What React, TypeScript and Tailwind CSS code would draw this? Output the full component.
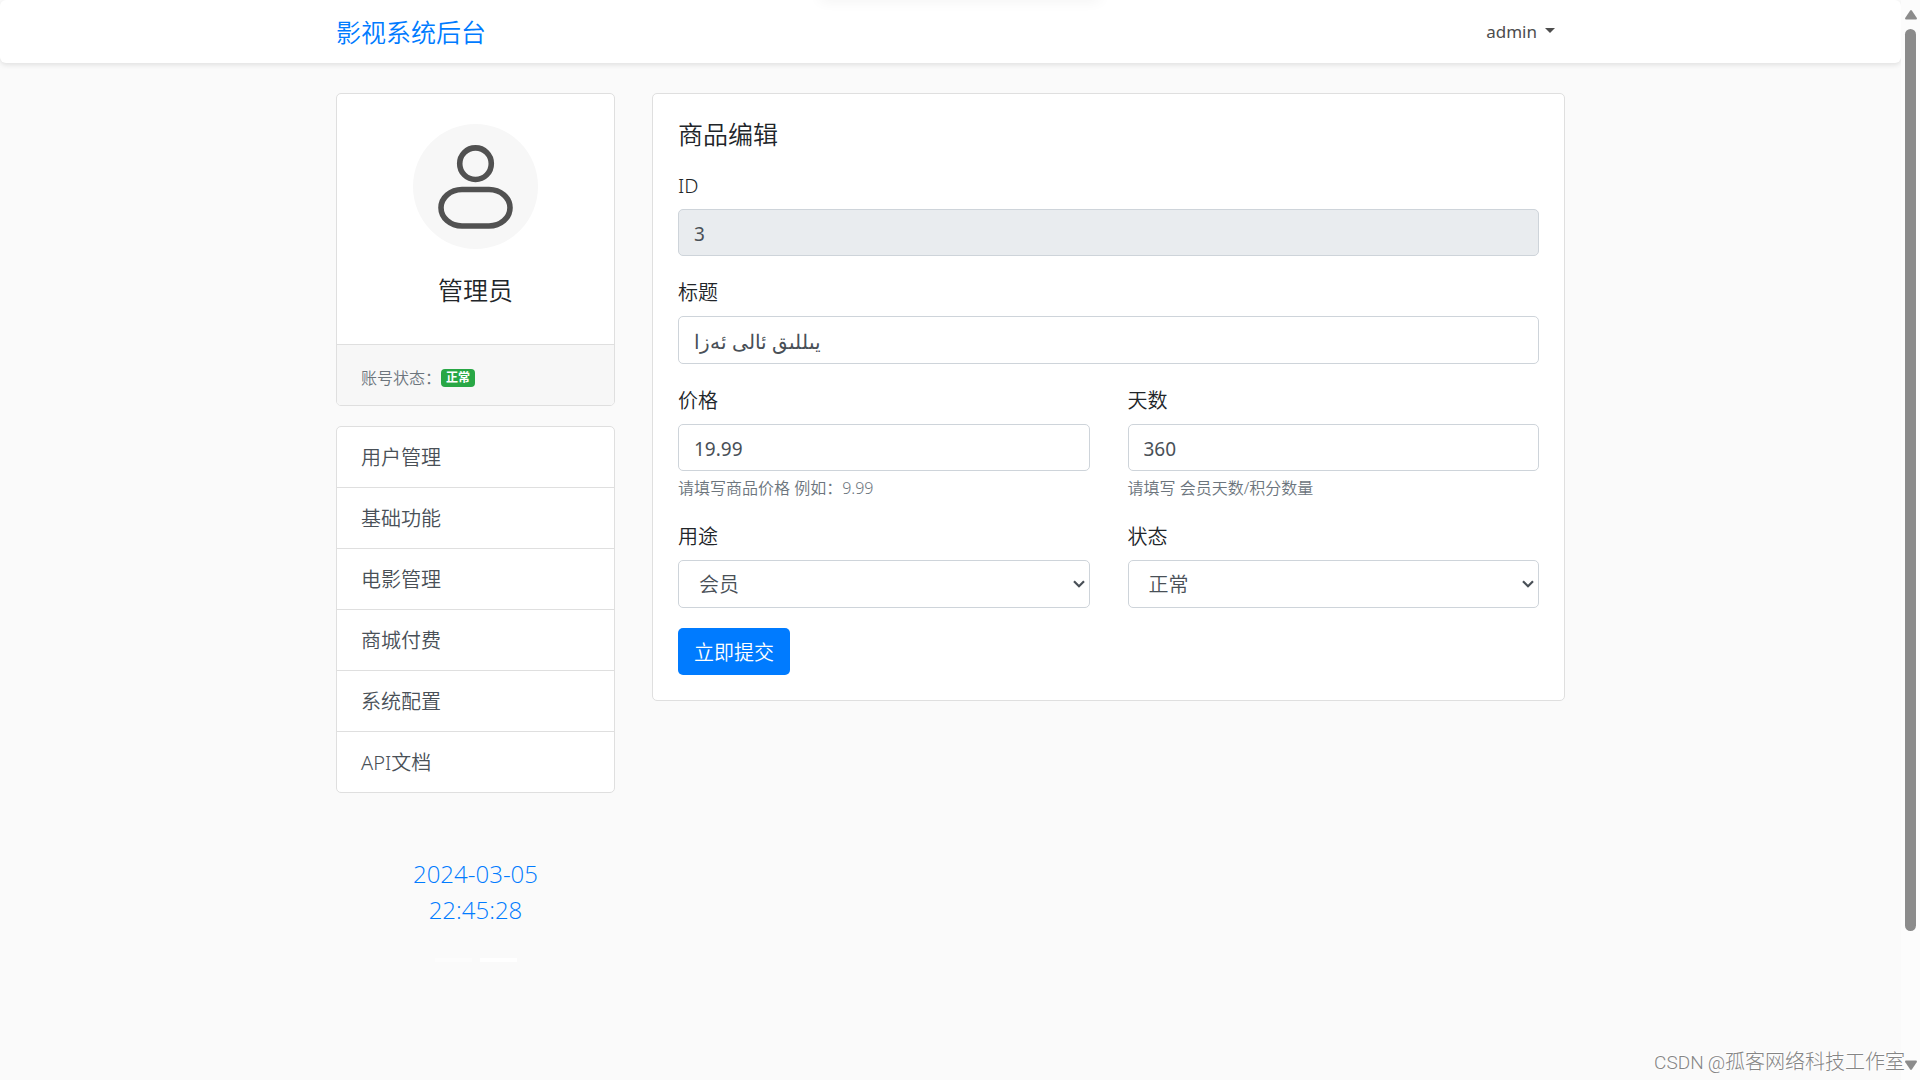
import { useState } from 'react';
import type { ReactNode } from 'react';

const MENU = ['用户管理', '基础功能', '电影管理', '商城付费', '系统配置', 'API文档'];

const controlClass =
  'block w-full rounded-[5px] border border-[#ced4da] px-[15px] pt-[2px] font-normal text-[#495057] outline-none focus:border-[#80bdff]';

export default function App() {
  return (
    <div className="relative flex min-h-screen overflow-hidden bg-[#fafafa] font-['Noto_Sans','Noto_Sans_CJK_SC',sans-serif] text-[20px] leading-[30px] font-[350] text-[#212529]">
      <div className="min-w-0 flex-1">
        <Navbar />
        <main className="mx-auto mt-[30px] flex max-w-[1229px] items-start gap-[37px]">
          <aside className="w-[279px] shrink-0">
            <ProfileCard />
            <SideMenu />
            <Clock />
          </aside>
          <ProductForm />
        </main>
      </div>
      <Scrollbar />
      <div className="absolute -top-2 left-1/2 h-2 w-[280px] -translate-x-1/2 shadow-[0_0_14px_rgba(0,0,0,0.07)]" />
      <div className="absolute right-[15px] bottom-[2px] flex items-baseline gap-1 font-['Roboto','Noto_Sans_CJK_SC',sans-serif] font-light text-[#858585] [text-shadow:-1px_-1px_0_#fff]">
        <span className="text-[19px]">CSDN</span>
        <span>
          <span className="text-[19px]">@</span>孤客网络科技工作室
        </span>
      </div>
    </div>
  );
}

function Navbar() {
  return (
    <header className="rounded-md bg-white shadow-[0_2px_5px_rgba(0,0,0,0.1)]">
      <nav className="mx-auto flex h-[63px] max-w-[1229px] items-center justify-between">
        <a href="#" className="text-[25px] text-[#007bff]">
          影视系统后台
        </a>
        <button className="flex items-center gap-2 pr-[10px] text-[17px] font-normal text-[#4d4d4d]">
          admin
          <svg width="10" height="5" viewBox="0 0 10 5" fill="currentColor" className="mb-[2px]">
            <path d="M0 0h10L5 5z" />
          </svg>
        </button>
      </nav>
    </header>
  );
}

function ProfileCard() {
  return (
    <section className="overflow-hidden rounded-[5px] border border-[#dfdfdf] bg-white">
      <div className="flex h-[250px] flex-col items-center pt-[30px]">
        <svg width="125" height="125" viewBox="0 0 125 125" fill="none" stroke="#515151" strokeWidth="5.6">
          <circle cx="62.5" cy="62.5" r="62.5" fill="#f7f7f7" stroke="none" />
          <circle cx="62.5" cy="39.7" r="15.8" />
          <rect x="28" y="65.5" width="69" height="36.5" rx="21" ry="18.25" />
        </svg>
        <h2 className="mt-[26px] text-[25px]">管理员</h2>
      </div>
      <div className="flex h-[61px] items-center border-t border-[#dfdfdf] bg-[#f7f7f7] px-6 pt-[5px] text-[16px] text-[#6c757d]">
        账号状态：
        <span className="rounded bg-[#28a745] px-[5px] text-[12px] leading-[18px] font-bold text-white">正常</span>
      </div>
    </section>
  );
}

function SideMenu() {
  return (
    <nav className="mt-5 divide-y divide-[#dfdfdf] overflow-hidden rounded-[5px] border border-[#dfdfdf] bg-white">
      {MENU.map((item) => (
        <a key={item} href="#" className="block px-6 pt-4 pb-[14px] text-[#495057] hover:bg-[#f8f9fa]">
          {item}
        </a>
      ))}
    </nav>
  );
}

function Clock() {
  return (
    <div className="mt-[63px] flex flex-col items-center text-center">
      <time
        dateTime="2024-03-05T22:45:28"
        className="font-['Open_Sans',sans-serif] text-[24px] leading-9 font-light text-[#007bff]"
      >
        2024-03-05
        <br />
        22:45:28
      </time>
      <div className="mt-[30px] flex gap-2">
        <span className="h-1 w-[37px] bg-[#fcfcfc]" />
        <span className="h-1 w-[37px] bg-white" />
      </div>
    </div>
  );
}

function ProductForm() {
  const [title, setTitle] = useState('يىللىق ئالى ئەزا');
  const [price, setPrice] = useState('19.99');
  const [days, setDays] = useState('360');

  return (
    <form
      className="min-w-0 flex-1 rounded-[5px] border border-[#dfdfdf] bg-white p-[25px]"
      onSubmit={(event) => event.preventDefault()}
    >
      <h1 className="mb-5 text-[25px]">商品编辑</h1>
      <Field id="product-id" label="ID">
        <input id="product-id" className={`${controlClass} h-[47px] bg-[#e9ecef] text-[19px]`} value="3" readOnly />
      </Field>
      <Field id="title" label="标题">
        <input
          id="title"
          className={`${controlClass} h-12 bg-white text-[20px]`}
          value={title}
          onChange={(event) => setTitle(event.target.value)}
        />
      </Field>
      <div className="grid grid-cols-2 gap-x-[38px]">
        <Field id="price" label="价格" hint="请填写商品价格 例如：9.99">
          <input
            id="price"
            className={`${controlClass} h-[47px] bg-white text-[19px]`}
            value={price}
            onChange={(event) => setPrice(event.target.value)}
          />
        </Field>
        <Field id="days" label="天数" hint="请填写 会员天数/积分数量">
          <input
            id="days"
            className={`${controlClass} h-[47px] bg-white text-[19px]`}
            value={days}
            onChange={(event) => setDays(event.target.value)}
          />
        </Field>
        <Field id="usage" label="用途">
          <Select id="usage" options={['会员', '积分']} />
        </Field>
        <Field id="status" label="状态">
          <Select id="status" options={['正常', '禁用']} />
        </Field>
      </div>
      <button
        type="submit"
        className="block h-[47px] rounded-[5px] bg-[#007bff] px-4 pt-[2px] text-white hover:bg-[#0069d9]"
      >
        立即提交
      </button>
    </form>
  );
}

function Field({ id, label, hint, children }: { id: string; label: string; hint?: string; children: ReactNode }) {
  return (
    <div className="mb-5">
      <label htmlFor={id} className="mb-2 block pt-[2px]">
        {label}
      </label>
      {children}
      {hint ? <small className="mt-[5px] block text-[16px] leading-6 text-[#6c757d]">{hint}</small> : null}
    </div>
  );
}

function Select({ id, options }: { id: string; options: string[] }) {
  return (
    <div className="relative">
      <select
        id={id}
        className="block h-12 w-full appearance-none rounded-[5px] border border-[#ced4da] bg-white px-5 pt-[2px] text-[20px] text-[#495057] outline-none"
      >
        {options.map((option) => (
          <option key={option}>{option}</option>
        ))}
      </select>
      <svg
        className="pointer-events-none absolute top-5 right-[5px]"
        width="12"
        height="8"
        viewBox="0 0 12 8"
        fill="none"
        stroke="#495057"
        strokeWidth="2.2"
      >
        <path d="M1 1.2l5 5 5-5" />
      </svg>
    </div>
  );
}

function Scrollbar() {
  return (
    <div className="flex w-[19px] shrink-0 flex-col items-center bg-[#fcfcfc] py-[10px] text-[#8b8b8b]">
      <svg width="12" height="10" viewBox="0 0 12 10" fill="currentColor">
        <path d="M5 .8Q6-.6 7 .8l4.700 7Q12.400 9.500 11 9.500H1Q-.4 9.500.3 7.800z" />
      </svg>
      <div className="mt-[9px] flex w-[11px] flex-1 flex-col">
        <div className="h-[87.5%] rounded-full bg-[#8b8b8b]" />
      </div>
      <svg width="12" height="10" viewBox="0 0 12 10" fill="currentColor">
        <path d="M5 9.200Q6 10.600 7 9.200l4.700-7Q12.400.5 11 .5H1Q-.4.5.3 2.200z" />
      </svg>
    </div>
  );
}
